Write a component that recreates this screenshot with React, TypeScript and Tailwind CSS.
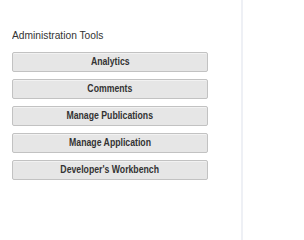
export default function App() {
  const tools = ['Analytics', 'Comments', 'Manage Publications', 'Manage Application', "Developer's Workbench"];

  return (
    <div className="flex h-[240px] w-[304px] bg-white font-['Liberation_Sans',Arial,sans-serif]">
      <div className="w-[243px] border-r-2 border-[#eef0f5] pl-3 pr-[33px] pt-[28px]">
        <h2 className="mb-[10px] text-[11px] leading-[14px] text-[#333]">
          <span className="inline-block origin-left scale-x-[0.93]">Administration Tools</span>
        </h2>
        <div className="flex flex-col gap-[7px]">
          {tools.map((t) => (
            <button
              key={t}
              className="h-[20px] w-full rounded-[2px] border border-[#c2c2c2] bg-[#e6e6e6] pb-[2px] text-[10px] font-bold text-[#333] shadow-[inset_0_1px_0_#f2f2f2]"
            >
              <span className="inline-block scale-x-[0.87]">{t}</span>
            </button>
          ))}
        </div>
      </div>
      <div className="flex-1" />
    </div>
  );
}
